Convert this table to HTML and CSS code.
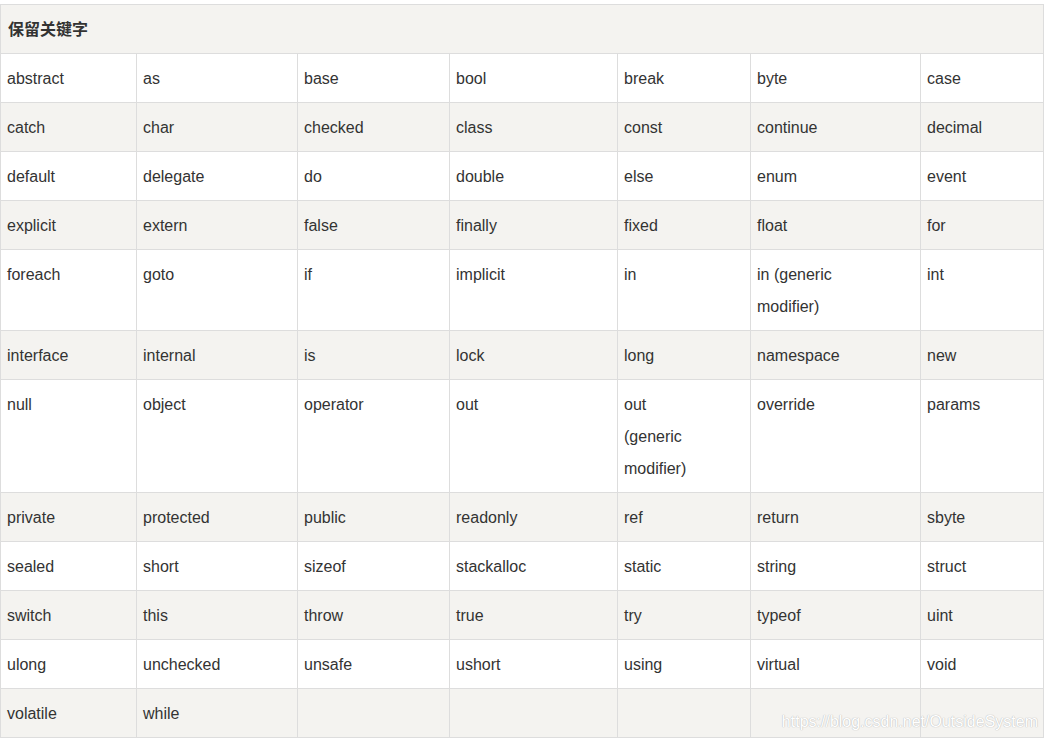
FILE: index.html
```html
<!DOCTYPE html>
<html lang="zh">
<head>
<meta charset="utf-8">
<title>保留关键字</title>
<link rel="stylesheet" href="styles.css">
</head>
<body>
<div class="wrap">
<table class="kw">
<colgroup>
<col class="c1"><col class="c2"><col class="c3"><col class="c4"><col class="c5"><col class="c6"><col class="c7">
</colgroup>
<thead>
<tr class="alt"><th colspan="7">保留关键字</th></tr>
</thead>
<tbody>
<tr><td>abstract</td><td>as</td><td>base</td><td>bool</td><td>break</td><td>byte</td><td>case</td></tr>
<tr class="alt"><td>catch</td><td>char</td><td>checked</td><td>class</td><td>const</td><td>continue</td><td>decimal</td></tr>
<tr><td>default</td><td>delegate</td><td>do</td><td>double</td><td>else</td><td>enum</td><td>event</td></tr>
<tr class="alt"><td>explicit</td><td>extern</td><td>false</td><td>finally</td><td>fixed</td><td>float</td><td>for</td></tr>
<tr><td>foreach</td><td>goto</td><td>if</td><td>implicit</td><td>in</td><td>in (generic<br>modifier)</td><td>int</td></tr>
<tr class="alt"><td>interface</td><td>internal</td><td>is</td><td>lock</td><td>long</td><td>namespace</td><td>new</td></tr>
<tr><td>null</td><td>object</td><td>operator</td><td>out</td><td>out<br>(generic<br>modifier)</td><td>override</td><td>params</td></tr>
<tr class="alt"><td>private</td><td>protected</td><td>public</td><td>readonly</td><td>ref</td><td>return</td><td>sbyte</td></tr>
<tr><td>sealed</td><td>short</td><td>sizeof</td><td>stackalloc</td><td>static</td><td>string</td><td>struct</td></tr>
<tr class="alt"><td>switch</td><td>this</td><td>throw</td><td>true</td><td>try</td><td>typeof</td><td>uint</td></tr>
<tr><td>ulong</td><td>unchecked</td><td>unsafe</td><td>ushort</td><td>using</td><td>virtual</td><td>void</td></tr>
<tr class="alt"><td>volatile</td><td>while</td><td></td><td></td><td></td><td></td><td></td></tr>
</tbody>
</table>
<div class="watermark">https://blog.csdn.net/OutsideSystem</div>
</div>
</body>
</html>
```
FILE: styles.css
```css
html, body {
  margin: 0;
  padding: 0;
  background: #ffffff;
}
body {
  padding-top: 4px;
  font-family: "Liberation Sans", "Noto Sans CJK SC", Arial, sans-serif;
  color: #333333;
}
.wrap {
  position: relative;
  width: 1043px;
}
.kw {
  width: 1043px;
  table-layout: fixed;
  border-collapse: collapse;
  font-size: 16px;
  line-height: 32px;
}
.c1 { width: 136px; }
.c2 { width: 161px; }
.c3 { width: 152px; }
.c4 { width: 168px; }
.c5 { width: 133px; }
.c6 { width: 170px; }
.c7 { width: 123px; }
.kw th,
.kw td {
  border: 1px solid #dddddd;
  padding: 9px 6px 7px 6px;
  text-align: left;
  vertical-align: top;
  color: #333333;
}
.kw th {
  font-weight: bold;
  padding-left: 7px;
  font-family: "Liberation Sans", "Noto Sans CJK SC", sans-serif;
}
.kw tr.alt th,
.kw tr.alt td {
  background: #f4f3f0;
}
.watermark {
  position: absolute;
  right: 5px;
  bottom: 6px;
  font-size: 16px;
  line-height: 20px;
  color: #ffffff;
  text-shadow: 0 0 1px #bdbdbd, 0 0 1px #bdbdbd;
  font-family: "Liberation Sans", sans-serif;
}
```
